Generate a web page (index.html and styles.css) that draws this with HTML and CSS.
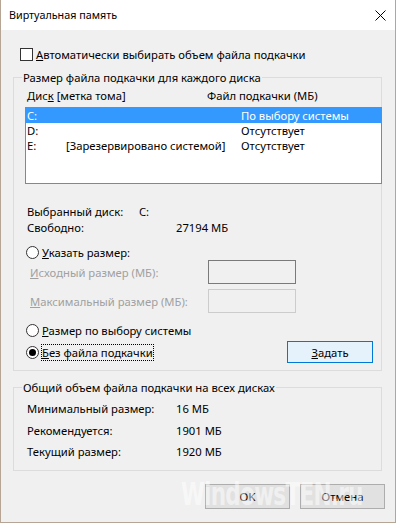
FILE: index.html
```html
<!DOCTYPE html>
<html lang="ru">
<head>
    <meta charset="UTF-8">
    <meta name="viewport" content="width=device-width, initial-scale=1.0">
    <title>Виртуальная память</title>
    <link rel="stylesheet" href="styles.css">
</head>
<body>
    <div class="window">
        <div class="titlebar">
            <span class="title">Виртуальная память</span>
            <svg class="close" width="11" height="11" viewBox="0 0 11 11">
                <path d="M0.5 0.5 L10.5 10.5 M10.5 0.5 L0.5 10.5" stroke="#000" stroke-width="1" fill="none"/>
            </svg>
        </div>

        <div class="content">
            <div class="check-row">
                <span class="checkbox"></span>
                <span><u>А</u>втоматически выбирать объем файла подкачки</span>
            </div>

            <div class="group group-disks">
                <span class="group-title">Размер файла подкачки для каждого диска</span>

                <div class="list-header">
                    <span class="col-disk">Дис<u>к</u> [метка тома]</span>
                    <span>Файл подкачки (МБ)</span>
                </div>

                <div class="listbox">
                    <div class="list-row selected">
                        <span class="col-drive">C:</span>
                        <span class="col-label"></span>
                        <span>По выбору системы</span>
                    </div>
                    <div class="list-row">
                        <span class="col-drive">D:</span>
                        <span class="col-label"></span>
                        <span>Отсутствует</span>
                    </div>
                    <div class="list-row">
                        <span class="col-drive">E:</span>
                        <span class="col-label">[Зарезервировано системой]</span>
                        <span>Отсутствует</span>
                    </div>
                </div>

                <div class="info-row first">
                    <span class="label-short">Выбранный диск:</span>
                    <span>C:</span>
                </div>
                <div class="info-row second">
                    <span class="label-long">Свободно:</span>
                    <span>27194 МБ</span>
                </div>

                <div class="radio-row custom">
                    <span class="radio"></span>
                    <span><u>У</u>казать размер:</span>
                </div>

                <div class="field-row">
                    <span class="field-label"><u>И</u>сходный размер (МБ):</span>
                    <span class="field-box active"></span>
                </div>
                <div class="field-row second">
                    <span class="field-label"><u>М</u>аксимальный размер (МБ):</span>
                    <span class="field-box"></span>
                </div>

                <div class="radio-row system">
                    <span class="radio"></span>
                    <span><u>Р</u>азмер по выбору системы</span>
                </div>

                <div class="last-row">
                    <div class="radio-row none">
                        <span class="radio checked"></span>
                        <span class="focus"><u>Б</u>ез файла подкачки</span>
                    </div>
                    <button class="btn btn-set"><u>З</u>адать</button>
                </div>
            </div>

            <div class="group group-total">
                <span class="group-title">Общий объем файла подкачки на всех дисках</span>
                <div class="total-row">
                    <span class="label-long">Минимальный размер:</span>
                    <span>16 МБ</span>
                </div>
                <div class="total-row">
                    <span class="label-long">Рекомендуется:</span>
                    <span>1901 МБ</span>
                </div>
                <div class="total-row">
                    <span class="label-long">Текущий размер:</span>
                    <span>1920 МБ</span>
                </div>
            </div>

            <div class="buttons">
                <button class="btn">OK</button>
                <button class="btn">Отмена</button>
            </div>
        </div>

        <div class="watermark">WindowsTEN.ru</div>
    </div>
</body>
</html>
```

FILE: styles.css
```css
* {
    box-sizing: border-box;
    margin: 0;
    padding: 0;
}

body {
    font-family: 'Noto Sans', sans-serif;
    font-size: 11.25px;
    line-height: 15px;
    color: #000;
    background: #fff;
    white-space: nowrap;
}

.window {
    position: relative;
    width: 396px;
    height: 523px;
    overflow: hidden;
    display: flex;
    flex-direction: column;
    border: 1px solid #b6a595;
    border-top: none;
    background: #f0f0f0;
}

/* title bar */
.titlebar {
    height: 30px;
    background: #fff;
    display: flex;
    align-items: center;
    justify-content: space-between;
    padding: 0 9px 0 8px;
}

.title {
    font-size: 10.75px;
}

.close {
    display: block;
    margin-top: 1px;
}

.content {
    flex: 1;
    display: flex;
    flex-direction: column;
    padding: 17px 13px 0 12px;
}

/* check row */
.check-row {
    display: flex;
    align-items: center;
    margin-left: 7px;
    gap: 3px;
}

.checkbox {
    width: 13px;
    height: 13px;
    border: 1px solid #333;
    background: #fff;
}

/* group boxes */
.group {
    display: flex;
    flex-direction: column;
    border: 1px solid #dcdcdc;
}

.group-disks {
    margin-top: 15px;
    padding-bottom: 7px;
}

.group-total {
    margin-top: 16px;
    padding-bottom: 11px;
}

.group-title {
    align-self: flex-start;
    margin: -8px 0 0 8px;
    padding: 0 1px;
    background: #f0f0f0;
}

.list-header {
    display: flex;
    margin-top: 3px;
    padding-left: 13px;
}

.col-disk {
    width: 180px;
}

/* list */
.listbox {
    width: 357px;
    height: 77px;
    margin: 4px 0 0 11px;
    border: 1px solid #828790;
    background: #fff;
}

.list-row {
    display: flex;
    height: 15px;
    padding-left: 1px;
}

.list-row.selected {
    background: #3399ff;
    color: #fff;
}

.col-drive {
    width: 39px;
}

.col-label {
    width: 175px;
}

/* info */
.info-row {
    display: flex;
    padding-left: 13px;
}

.info-row.first {
    margin-top: 20px;
}

.info-row.second {
    margin-top: 1px;
}

.label-short {
    width: 112px;
}

.label-long {
    width: 149px;
}

/* radios */
.radio-row {
    display: flex;
    align-items: center;
    gap: 3px;
    padding-left: 12px;
}

.radio-row.custom {
    margin-top: 10px;
}

.radio-row.system {
    margin-top: 10px;
}

.radio {
    width: 13px;
    height: 13px;
    border: 1px solid #333;
    border-radius: 50%;
    background: #fff;
    display: flex;
    align-items: center;
    justify-content: center;
}

.radio.checked::after {
    content: "";
    width: 7px;
    height: 7px;
    border-radius: 50%;
    background: #000;
}

.focus {
    outline: 1px dotted #000;
    outline-offset: 0;
}

.field-row {
    display: flex;
    align-items: center;
    padding-left: 16px;
    color: #a0a0a0;
}

.field-row.second {
    margin-top: 5px;
}

.field-label {
    width: 178px;
}

.field-box {
    width: 88px;
    height: 24px;
    border: 1px solid #cccccc;
}

.field-box.active {
    border-color: #7a7a7a;
}

.last-row {
    display: flex;
    align-items: center;
    justify-content: space-between;
    margin-top: 3px;
    padding-right: 8px;
}

/* buttons */
.btn {
    font: inherit;
    color: #000;
    width: 85px;
    height: 25px;
    background: #e1e1e1;
    border: 1px solid #adadad;
}

.btn-set {
    width: 86px;
    height: 22px;
    background: #e5f1fb;
    border-color: #0078d7;
}

.total-row {
    display: flex;
    padding-left: 13px;
    margin-top: 6px;
}

.total-row + .total-row {
    margin-top: 7px;
}

.total-row:last-child {
    margin-top: 6px;
}

.buttons {
    display: flex;
    justify-content: flex-end;
    gap: 10px;
    margin: 13px -3px 0 0;
}

.watermark {
    position: absolute;
    left: 180px;
    top: 476px;
    font-family: 'DejaVu Sans Condensed', 'DejaVu Sans', sans-serif;
    font-weight: bold;
    font-size: 32px;
    line-height: 36px;
    color: rgba(255, 255, 255, 0.5);
    letter-spacing: -1px;
    transform: scaleX(0.75);
    transform-origin: left top;
    pointer-events: none;
}
```
